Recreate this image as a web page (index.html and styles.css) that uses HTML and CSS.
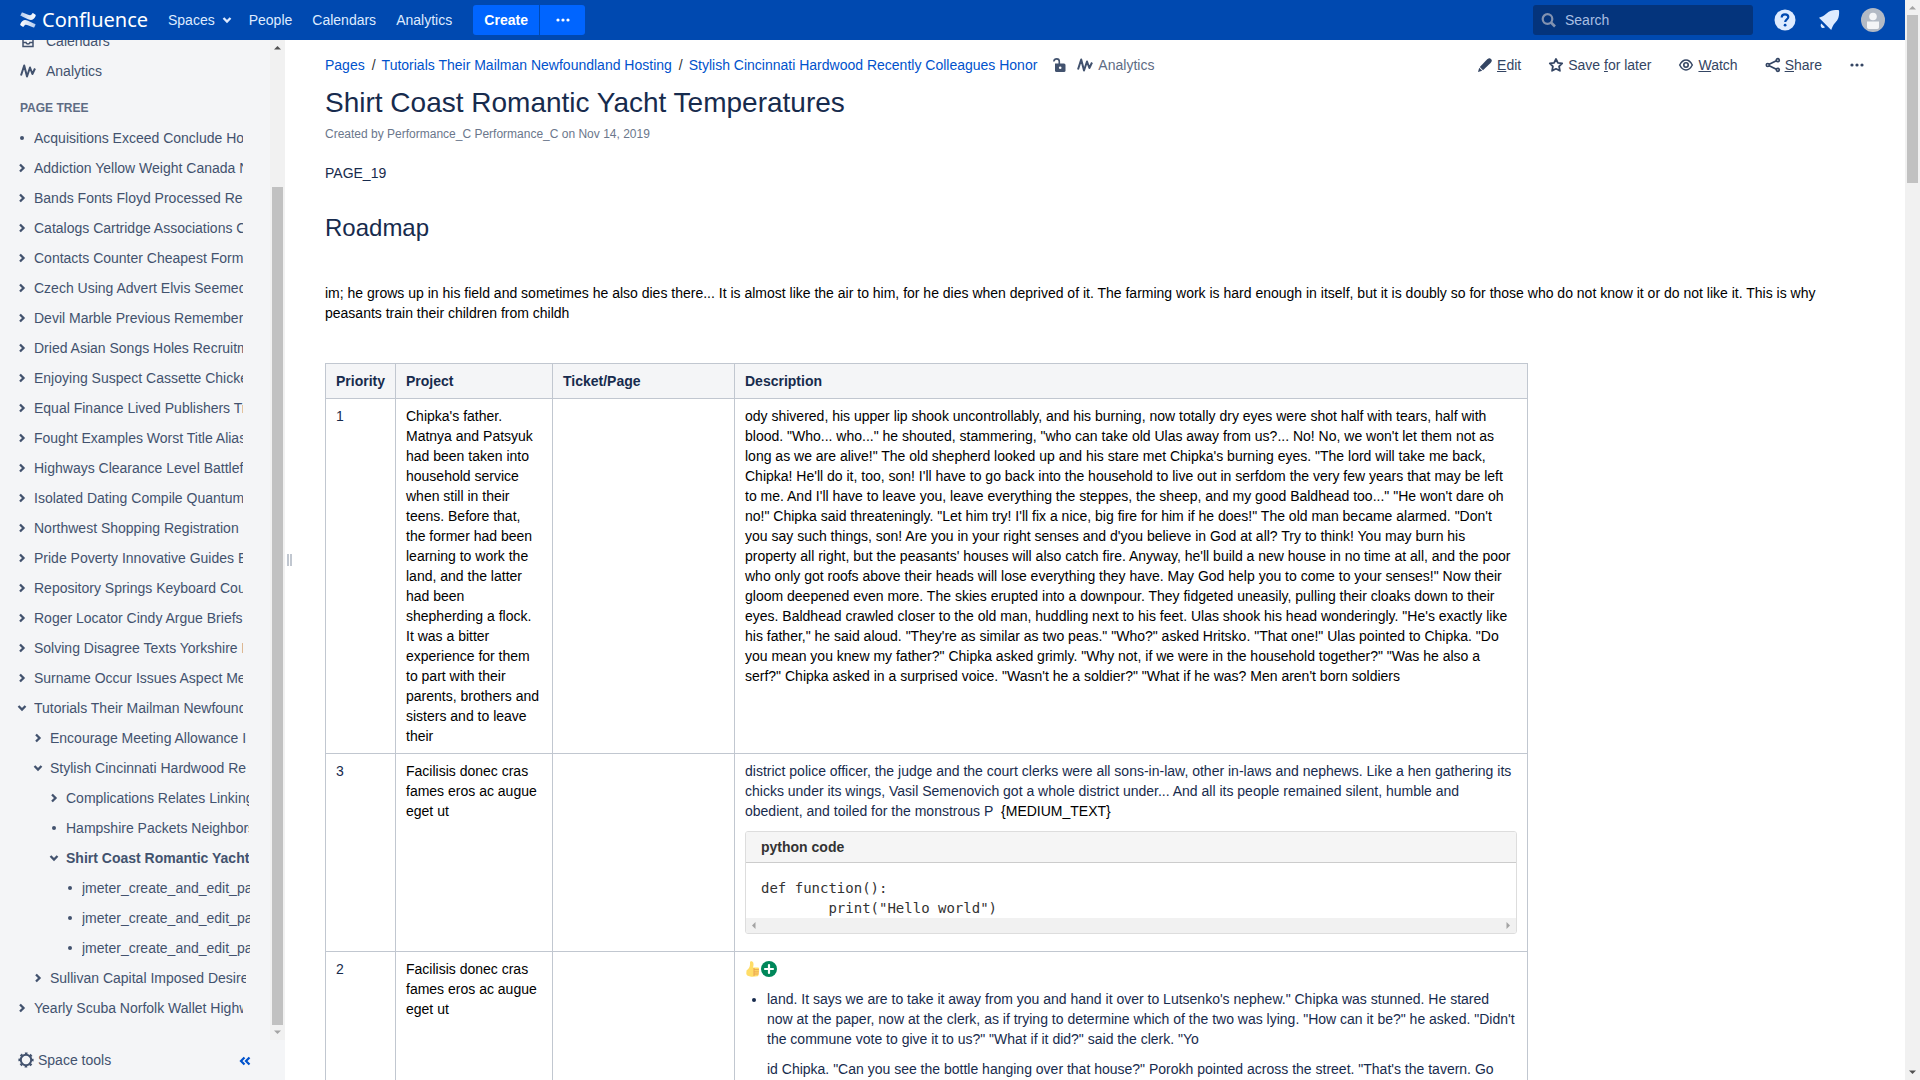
FILE: index.html
```html
<!DOCTYPE html>
<html lang="en">
<head>
<meta charset="utf-8">
<title>Shirt Coast Romantic Yacht Temperatures - Confluence</title>
<link rel="stylesheet" href="styles.css">
</head>
<body>
<svg class="sprite" aria-hidden="true">
  <symbol id="right" viewBox="0 0 16 16"><path d="M6 4.500 9.500 8 6 11.500" fill="none" stroke="currentColor" stroke-width="2.300"/></symbol>
  <symbol id="down" viewBox="0 0 16 16"><path d="M4.500 6 8 9.500 11.500 6" fill="none" stroke="currentColor" stroke-width="2.300"/></symbol>
  <symbol id="dot" viewBox="0 0 16 16"><circle cx="8" cy="8" r="2" fill="currentColor"/></symbol>
  <symbol id="pulse" viewBox="0 0 16 16"><path d="M1 12.500 4.200 2.500 7 13.500 10 4.500 12.400 11 15 5.500" fill="none" stroke="currentColor" stroke-width="2" stroke-linejoin="round"/></symbol>
  <symbol id="dots" viewBox="0 0 16 16"><g fill="currentColor"><circle cx="3" cy="8" r="1.600"/><circle cx="8" cy="8" r="1.600"/><circle cx="13" cy="8" r="1.600"/></g></symbol>
</svg>
<div class="app">
  <header class="topbar">
    <a class="logo" href="#">
      <svg width="16" height="16" viewBox="0 0 16 16">
        <defs>
          <linearGradient id="lg1" x1="1" y1="0" x2="0" y2="0"><stop offset="0" stop-color="#fff"/><stop offset="1" stop-color="#b4cbee"/></linearGradient>
          <linearGradient id="lg2" x1="0" y1="0" x2="1" y2="0"><stop offset="0" stop-color="#fff"/><stop offset="1" stop-color="#b4cbee"/></linearGradient>
        </defs>
        <path fill="url(#lg2)" d="M.5 11.700C2.500 8 4.500 7.300 8 8.800l4.800 2.200c3 1.500 3 1 2.600 1.900l-1 2.200c-.2.500-.5.600-.9.400L8.500 13.600c-2.700-1.200-3.500-1-4.800.9-.3.500-.6.500-1 .3L.8 13.400c-.5-.3-.8-.8-.3-1.700z"/>
        <path fill="url(#lg1)" d="M15.500 4.300C13.500 8 11.500 8.700 8 7.200L3.200 5C.2 3.500.2 4 .6 3.100l1-2.200C1.800.4 2.100.3 2.500.5l5 1.900c2.700 1.200 3.500 1 4.800-.9.300-.5.600-.5 1-.3l1.900 1.400c.5.300.8.800.3 1.700z"/>
      </svg>
      <span>Confluence</span>
    </a>
    <nav class="nav">
      <a href="#">Spaces <svg class="i"><use href="#down"/></svg></a>
      <a href="#">People</a>
      <a href="#">Calendars</a>
      <a href="#">Analytics</a>
    </nav>
    <div class="create">
      <button class="create-main">Create</button>
      <button class="create-more" aria-label="Create from template"><svg class="i"><use href="#dots"/></svg></button>
    </div>
    <div class="tools">
      <label class="search">
        <svg class="i" viewBox="0 0 16 16"><circle cx="6.500" cy="7" r="4.800" fill="none" stroke="currentColor" stroke-width="2.200"/><path d="M10 10.500 14 14.500" stroke="currentColor" stroke-width="2.600"/></svg>
        <input type="text" placeholder="Search" aria-label="Search">
      </label>
      <button class="tool" aria-label="Help"><svg width="24" height="24" viewBox="0 0 24 24"><circle cx="12" cy="12" r="10.500" fill="#deebff"/><path d="M8.700 9.500c0-2 1.400-3.200 3.300-3.200s3.300 1.100 3.300 2.800c0 2.300-3.100 2.300-3.100 4.900" fill="none" stroke="#0049b0" stroke-width="2.200"/><circle cx="12.100" cy="17.200" r="1.400" fill="#0049b0"/></svg></button>
      <button class="tool" aria-label="Notifications"><svg width="24" height="24" viewBox="0 0 24 24"><path fill="#deebff" d="M2 9.800C4.500 8.900 7.200 8 9.500 5.600 12.500 2.500 15.500 2 18.500 2c1.200-.1 2.800-.2 3.300.3.500.5.300 2 .3 3.200-.2 3-.6 6-3.700 9-2.300 2.300-3.300 5-4.200 7.600z"/><path fill="#deebff" d="M4.300 15.600 8 19.300c-1 1-2.600 1-3.500.1-1-1-1.100-2.700-.2-3.800z"/></svg></button>
      <button class="tool" aria-label="Account"><svg width="24" height="24" viewBox="0 0 24 24"><circle cx="12" cy="12" r="12" fill="#b3bac5"/><circle cx="12" cy="8.500" r="3.800" fill="#f4f5f7"/><path d="M6 13.500h12v6a2 2 0 0 1-2 1.500H8a2 2 0 0 1-2-1.500z" fill="#f4f5f7"/></svg></button>
    </div>
  </header>

  <div class="body">
    <aside class="sidebar">
      <div class="side-scroll">
        <div class="side-content">
          <a class="side-link" href="#"><svg class="i" viewBox="0 0 16 16"><path d="M3 3.500h10v10H3zM3 9.500h3c.5 2 3.500 2 4 0h3" fill="none" stroke="currentColor" stroke-width="1.500"/></svg>Calendars</a>
          <a class="side-link" href="#"><svg class="i"><use href="#pulse"/></svg>Analytics</a>
          <h2 class="side-title">PAGE TREE</h2>
          <ul class="tree">
            <li><a href="#"><svg class="i"><use href="#dot"/></svg><span>Acquisitions Exceed Conclude Hours</span></a></li>
            <li><a href="#"><svg class="i"><use href="#right"/></svg><span>Addiction Yellow Weight Canada Note</span></a></li>
            <li><a href="#"><svg class="i"><use href="#right"/></svg><span>Bands Fonts Floyd Processed Report</span></a></li>
            <li><a href="#"><svg class="i"><use href="#right"/></svg><span>Catalogs Cartridge Associations Cold</span></a></li>
            <li><a href="#"><svg class="i"><use href="#right"/></svg><span>Contacts Counter Cheapest Forms</span></a></li>
            <li><a href="#"><svg class="i"><use href="#right"/></svg><span>Czech Using Advert Elvis Seemed</span></a></li>
            <li><a href="#"><svg class="i"><use href="#right"/></svg><span>Devil Marble Previous Remembered</span></a></li>
            <li><a href="#"><svg class="i"><use href="#right"/></svg><span>Dried Asian Songs Holes Recruitment</span></a></li>
            <li><a href="#"><svg class="i"><use href="#right"/></svg><span>Enjoying Suspect Cassette Chicken</span></a></li>
            <li><a href="#"><svg class="i"><use href="#right"/></svg><span>Equal Finance Lived Publishers Trip</span></a></li>
            <li><a href="#"><svg class="i"><use href="#right"/></svg><span>Fought Examples Worst Title Alias</span></a></li>
            <li><a href="#"><svg class="i"><use href="#right"/></svg><span>Highways Clearance Level Battlefield</span></a></li>
            <li><a href="#"><svg class="i"><use href="#right"/></svg><span>Isolated Dating Compile Quantum</span></a></li>
            <li><a href="#"><svg class="i"><use href="#right"/></svg><span>Northwest Shopping Registration</span></a></li>
            <li><a href="#"><svg class="i"><use href="#right"/></svg><span>Pride Poverty Innovative Guides East</span></a></li>
            <li><a href="#"><svg class="i"><use href="#right"/></svg><span>Repository Springs Keyboard Course</span></a></li>
            <li><a href="#"><svg class="i"><use href="#right"/></svg><span>Roger Locator Cindy Argue Briefs</span></a></li>
            <li><a href="#"><svg class="i"><use href="#right"/></svg><span>Solving Disagree Texts Yorkshire Lake</span></a></li>
            <li><a href="#"><svg class="i"><use href="#right"/></svg><span>Surname Occur Issues Aspect Metal</span></a></li>
            <li><a href="#"><svg class="i"><use href="#down"/></svg><span>Tutorials Their Mailman Newfoundland Hosting</span></a>
              <ul>
                <li><a href="#"><svg class="i"><use href="#right"/></svg><span>Encourage Meeting Allowance Index</span></a></li>
                <li><a href="#"><svg class="i"><use href="#down"/></svg><span>Stylish Cincinnati Hardwood Recently Colleagues Honor</span></a>
                  <ul>
                    <li><a href="#"><svg class="i"><use href="#right"/></svg><span>Complications Relates Linking</span></a></li>
                    <li><a href="#"><svg class="i"><use href="#dot"/></svg><span>Hampshire Packets Neighbors</span></a></li>
                    <li><a class="current" href="#"><svg class="i"><use href="#down"/></svg><span>Shirt Coast Romantic Yacht Temperatures</span></a>
                      <ul>
                        <li><a href="#"><svg class="i"><use href="#dot"/></svg><span>jmeter_create_and_edit_page</span></a></li>
                        <li><a href="#"><svg class="i"><use href="#dot"/></svg><span>jmeter_create_and_edit_page</span></a></li>
                        <li><a href="#"><svg class="i"><use href="#dot"/></svg><span>jmeter_create_and_edit_page</span></a></li>
                      </ul>
                    </li>
                  </ul>
                </li>
                <li><a href="#"><svg class="i"><use href="#right"/></svg><span>Sullivan Capital Imposed Desired</span></a></li>
              </ul>
            </li>
            <li><a href="#"><svg class="i"><use href="#right"/></svg><span>Yearly Scuba Norfolk Wallet Highway</span></a></li>
          </ul>
        </div>
        <div class="bar side-bar">
          <svg class="active" viewBox="0 0 15 15"><path d="M4 9.500h7L7.500 6z"/></svg>
          <div class="track"><div class="thumb"></div></div>
          <svg viewBox="0 0 15 15"><path d="M4 5.500h7L7.500 9z"/></svg>
        </div>
      </div>
      <div class="side-foot">
        <button class="space-tools"><svg class="i" viewBox="0 0 16 16"><circle cx="8" cy="8" r="5.200" fill="none" stroke="currentColor" stroke-width="2"/><circle cx="8" cy="8" r="6.700" fill="none" stroke="currentColor" stroke-width="1.800" stroke-dasharray="2.600 2.660" stroke-dashoffset="1.300"/></svg>Space tools</button>
        <button class="collapse" aria-label="Collapse sidebar"><svg class="i" viewBox="0 0 16 16"><path d="M7.500 5.500 4 9l3.500 3.500M12.500 5.500 9 9l3.500 3.500" fill="none" stroke="currentColor" stroke-width="2.200"/></svg></button>
      </div>
    </aside>
    <div class="grip"><i></i><i></i></div>

    <main class="main">
      <div class="toolbar">
        <nav class="crumbs">
          <a href="#">Pages</a><span class="sep">/</span><a href="#">Tutorials Their Mailman Newfoundland Hosting</a><span class="sep">/</span><a href="#">Stylish Cincinnati Hardwood Recently Colleagues Honor</a>
          <button class="lock" aria-label="Restrictions"><svg class="i" viewBox="0 0 16 16"><path d="M4 6.500h9A1.500 1.500 0 0 1 14.500 8v5.500A1.500 1.500 0 0 1 13 15H5.500A1.500 1.500 0 0 1 4 13.500z" fill="currentColor"/><path d="M2.800 4.500C3.300 1 8.300 1 8.300 4.500V8" fill="none" stroke="currentColor" stroke-width="1.600"/><circle cx="9.200" cy="10.700" r="1.300" fill="#fff"/></svg></button>
          <a class="stats" href="#"><svg class="i"><use href="#pulse"/></svg>Analytics</a>
        </nav>
        <div class="actions">
          <a href="#"><svg class="i" viewBox="0 0 16 16"><path d="M10.200 2.200 12 1.200q1-.3 2 .8t.8 2l-1 1.800L6 13.200 2.800 10z" fill="currentColor"/><path d="M2.200 10.800 5.200 13.800 1 15z" fill="currentColor"/></svg><span><u>E</u>dit</span></a>
          <a href="#"><svg class="i" viewBox="0 0 16 16"><path d="M8 2 9.900 5.800 14.200 6.400 11.100 9.400 11.900 13.800 8 11.800 4.100 13.800 4.900 9.400 1.800 6.400 6.100 5.800z" fill="none" stroke="currentColor" stroke-width="1.800" stroke-linejoin="round"/></svg><span>Save <u>f</u>or later</span></a>
          <a href="#"><svg class="i" viewBox="0 0 16 16"><path d="M1.700 8C3.500 4.500 5.500 3 8 3s4.500 1.500 6.300 5C12.500 11.500 10.500 13 8 13S3.500 11.500 1.700 8z" fill="none" stroke="currentColor" stroke-width="1.500"/><circle cx="8" cy="8" r="2.200" fill="none" stroke="currentColor" stroke-width="1.600"/></svg><span><u>W</u>atch</span></a>
          <a href="#"><svg class="i" viewBox="0 0 16 16"><g fill="none" stroke="currentColor" stroke-width="1.700"><circle cx="2.800" cy="8" r="1.500"/><circle cx="12.800" cy="3.200" r="1.500"/><circle cx="12.800" cy="12.800" r="1.500"/><path d="M4.200 7.300 11.400 3.800M4.200 8.700 11.400 12.200"/></g></svg><span><u>S</u>hare</span></a>
          <button aria-label="More actions"><svg class="i"><use href="#dots"/></svg></button>
        </div>
      </div>
      <h1>Shirt Coast Romantic Yacht Temperatures</h1>
      <p class="meta">Created by Performance_C Performance_C on Nov 14, 2019</p>

      <article class="wiki">
        <p>PAGE_19</p>
        <h2>Roadmap</h2>
        <p><br></p>
        <p class="black">im; he grows up in his field and sometimes he also dies there... It is almost like the air to him, for he dies when deprived of it. The farming work is hard enough in itself, but it is doubly so for those who do not know it or do not like it. This is why peasants train their children from childh</p>
        <p><br></p>
        <table>
          <colgroup><col class="c1"><col class="c2"><col class="c3"><col class="c4"></colgroup>
          <thead><tr><th>Priority</th><th>Project</th><th>Ticket/Page</th><th>Description</th></tr></thead>
          <tbody>
            <tr>
              <td>1</td>
              <td class="black">Chipka's father. Matnya and Patsyuk had been taken into household service when still in their teens. Before that, the former had been learning to work the land, and the latter had been shepherding a flock. It was a bitter experience for them to part with their parents, brothers and sisters and to leave their</td>
              <td></td>
              <td class="black">ody shivered, his upper lip shook uncontrollably, and his burning, now totally dry eyes were shot half with tears, half with blood. "Who... who..." he shouted, stammering, "who can take old Ulas away from us?... No! No, we won't let them not as long as we are alive!" The old shepherd looked up and his stare met Chipka's burning eyes. "The lord will take me back, Chipka! He'll do it, too, son! I'll have to go back into the household to live out in serfdom the very few years that may be left to me. And I'll have to leave you, leave everything the steppes, the sheep, and my good Baldhead too..." "He won't dare oh no!" Chipka said threateningly. "Let him try! I'll fix a nice, big fire for him if he does!" The old man became alarmed. "Don't you say such things, son! Are you in your right senses and d'you believe in God at all? Try to think! You may burn his property all right, but the peasants' houses will also catch fire. Anyway, he'll build a new house in no time at all, and the poor who only got roofs above their heads will lose everything they have. May God help you to come to your senses!" Now their gloom deepened even more. The skies erupted into a downpour. They fidgeted uneasily, pulling their cloaks down to their eyes. Baldhead crawled closer to the old man, huddling next to his feet. Ulas shook his head wonderingly. "He's exactly like his father," he said aloud. "They're as similar as two peas." "Who?" asked Hritsko. "That one!" Ulas pointed to Chipka. "Do you mean you knew my father?" Chipka asked grimly. "Why not, if we were in the household together?" "Was he also a serf?" Chipka asked in a surprised voice. "Wasn't he a soldier?" "What if he was? Men aren't born soldiers</td>
            </tr>
            <tr>
              <td>3</td>
              <td class="black">Facilisis donec cras fames eros ac augue eget ut</td>
              <td></td>
              <td>
                <p>district police officer, the judge and the court clerks were all sons-in-law, other in-laws and nephews. Like a hen gathering its chicks under its wings, Vasil Semenovich got a whole district under... And all its people remained silent, humble and obedient, and toiled for the monstrous P&nbsp; <span class="black">{MEDIUM_TEXT}</span></p>
                <div class="code">
                  <div class="code-title">python code</div>
                  <pre>def function():
	print("Hello world")</pre>
                  <div class="hbar">
                    <svg viewBox="0 0 15 15"><path d="M9.500 4v7L6 7.500z"/></svg>
                    <svg viewBox="0 0 15 15"><path d="M5.500 4v7L9 7.500z"/></svg>
                  </div>
                </div>
              </td>
            </tr>
            <tr>
              <td>2</td>
              <td class="black">Facilisis donec cras fames eros ac augue eget ut</td>
              <td></td>
              <td>
                <p class="emotes">
                  <svg class="i" viewBox="0 0 16 16"><path fill="#ffdd67" d="M1.500 9.500C3.500 8 5 6 5 3.500V1.500C5-.3 7.800-.3 8.300 1.800c.4 1.600.2 3.200-.3 4.700h4.800c1.500 0 1.600 1.700.8 2.200.8.400.8 1.900 0 2.200.7.400.6 1.800-.2 2.100.4.700 0 2.200-1.200 2.200-2 .5-5 .7-7 .3-2.500-.5-3.900-1.500-3.900-3z"/><path stroke="#eba352" stroke-width="1" d="M9 8.700h5M9 10.900h4.900M9 13h4.600"/><path fill="none" stroke="#eba352" stroke-width="1" d="M9 7V15"/></svg>
                  <svg class="i" viewBox="0 0 16 16"><circle cx="8" cy="8" r="8" fill="#00875a"/><path d="M8 4v8M4 8h8" stroke="#fff" stroke-width="2.200" stroke-linecap="round"/></svg>
                </p>
                <ul>
                  <li>
                    <p>land. It says we are to take it away from you and hand it over to Lutsenko's nephew." Chipka was stunned. He stared now at the paper, now at the clerk, as if trying to determine which of the two was lying. "How can it be?" he asked. "Didn't the commune vote to give it to us?" "What if it did?" said the clerk. "Yo</p>
                    <p>id Chipka. "Can you see the bottle hanging over that house?" Porokh pointed across the street. "That's the tavern. Go</p>
                  </li>
                </ul>
              </td>
            </tr>
          </tbody>
        </table>
      </article>
    </main>
  </div>
</div>
<div class="bar page-bar">
  <svg viewBox="0 0 15 15"><path d="M4 9.500h7L7.500 6z"/></svg>
  <div class="track"><div class="thumb"></div></div>
  <svg class="active" viewBox="0 0 15 15"><path d="M4 5.500h7L7.500 9z"/></svg>
</div>
</body>
</html>
```
FILE: styles.css
```css
* { box-sizing: border-box; }

body {
  margin: 0;
  height: 100vh;
  display: flex;
  overflow: hidden;
  background: #fff;
  color: #172b4d;
  font: 14px/20px "Liberation Sans", Arial, sans-serif;
}

a { color: #0052cc; text-decoration: none; }
button {
  border: 0;
  padding: 0;
  background: none;
  color: inherit;
  font: inherit;
  display: flex;
  align-items: center;
}
h1, h2, p, ul { margin: 0; padding: 0; }
.sprite { display: none; }
.i { width: 16px; height: 16px; flex: none; display: block; }
.black { color: #000; }

.app { flex: 1; min-width: 0; display: flex; flex-direction: column; }

/* Header */
.topbar {
  height: 40px;
  flex: none;
  display: flex;
  align-items: center;
  padding: 0 20px;
  background: #0049b0;
  color: #deebff;
}
.logo {
  width: 138px;
  display: flex;
  align-items: center;
  gap: 6px;
  color: #fff;
  font: 20px/30px "Noto Sans", sans-serif;
}
.nav { display: flex; }
.nav a {
  display: flex;
  align-items: center;
  gap: 4px;
  padding: 0 10px;
  color: #deebff;
}
.nav a:first-child { padding-right: 4px; }
.create { display: flex; gap: 1px; margin-left: 11px; }
.create button {
  height: 30px;
  justify-content: center;
  background: #0065ff;
  color: #fff;
  font-weight: bold;
}
.create-main { width: 66px; border-radius: 3px 0 0 3px; }
.create-more { width: 45px; border-radius: 0 3px 3px 0; }
.tools { display: flex; align-items: center; gap: 20px; margin-left: auto; }
.search {
  width: 220px;
  height: 30px;
  display: flex;
  align-items: center;
  gap: 8px;
  padding: 0 8px;
  border-radius: 3px;
  background: #04347c;
  color: #8292b0;
}
.search input {
  flex: 1;
  min-width: 0;
  border: 0;
  padding: 0;
  background: none;
  color: #deebff;
  font: inherit;
}
.search input::placeholder { color: #a9bfe3; opacity: 1; }

/* Drawn scrollbars */
.bar {
  width: 15px;
  flex: none;
  display: flex;
  flex-direction: column;
  background: #f1f1f1;
}
.bar svg, .hbar svg { width: 15px; height: 15px; flex: none; fill: #a3a3a3; }
.bar svg.active { fill: #505050; }
.track { flex: 1; padding: 0 2px; }
.thumb { background: #c1c1c1; }
.page-bar .thumb { height: 16%; }
.side-bar .track { display: flex; flex-direction: column; justify-content: flex-end; }
.side-bar .thumb { height: 86.4%; }

/* Sidebar */
.body { flex: 1; min-height: 0; display: flex; }
.sidebar {
  width: 285px;
  flex: none;
  display: flex;
  flex-direction: column;
  background: #f4f5f7;
  color: #42526e;
}
.side-scroll { flex: 1; min-height: 0; display: flex; overflow: hidden; }
.side-content { flex: 1; min-width: 0; margin-top: -14px; padding: 0 27px 0 14px; }
.side-link {
  height: 30px;
  display: flex;
  align-items: center;
  gap: 10px;
  padding-left: 6px;
  color: #42526e;
}
.side-title {
  margin: 12px 0 5px 6px;
  color: #5e6c84;
  font-size: 12px;
  line-height: 20px;
}
.tree, .tree ul { list-style: none; }
.tree ul { padding-left: 16px; margin-right: -3px; }
.tree ul ul ul { margin-right: -1px; }
.tree a {
  height: 30px;
  display: flex;
  align-items: center;
  gap: 4px;
  color: #42526e;
}
.tree span { overflow: hidden; white-space: nowrap; }
.tree .current { font-weight: bold; }
.side-foot {
  height: 40px;
  flex: none;
  display: flex;
  align-items: center;
  justify-content: space-between;
  padding: 0 32px 0 18px;
}
.space-tools { gap: 4px; }
.collapse { color: #0052cc; }
.grip {
  width: 8px;
  flex: none;
  display: flex;
  align-items: center;
  gap: 1px;
  padding-left: 2px;
}
.grip i { width: 2px; height: 12px; background: #c1c7d0; }

/* Page */
.main { flex: 1; min-width: 0; overflow: hidden; padding: 15px 40px 0 32px; }
.toolbar { display: flex; justify-content: space-between; }
.crumbs { display: flex; align-items: center; white-space: nowrap; }
.sep { padding: 0 6px 0 7px; color: #333; }
.lock { margin: 0 10px 0 14px; color: #42526e; }
.stats { display: flex; align-items: center; gap: 5px; color: #5e6c84; }
.stats .i { color: #42526e; }
.actions { display: flex; gap: 27px; white-space: nowrap; color: #344563; }
.actions a { display: flex; align-items: center; gap: 4px; color: #344563; }
h1 { margin-top: 12px; font-size: 28px; font-weight: normal; line-height: 32px; }
.meta { margin-top: 5px; color: #6b778c; font-size: 12px; line-height: 20px; }

.wiki { margin-top: 19px; }
.wiki h2 { margin-top: 30px; font-size: 24px; font-weight: normal; line-height: 30px; }
.wiki p + p, .wiki h2 + p { margin-top: 10px; }
.wiki table {
  width: 1203px;
  margin-top: 10px;
  border-collapse: collapse;
  table-layout: fixed;
}
.c1 { width: 70px; }
.c2 { width: 157px; }
.c3 { width: 182px; }
th, td {
  padding: 7px 10px;
  border: 1px solid #c1c7d0;
  text-align: left;
  vertical-align: top;
}
th { background: #f4f5f7; }
td ul { margin-top: 10px; padding-left: 22px; }

.code {
  margin: 10px 0;
  border: 1px solid #ddd;
  border-radius: 3px;
  color: #333;
  overflow: hidden;
}
.code-title {
  padding: 5px 15px;
  border-bottom: 1px solid #ccc;
  background: #f5f5f5;
  font-weight: bold;
}
.code pre {
  margin: 0;
  padding: 15px 15px 0;
  font: 14px/20px "DejaVu Sans Mono", monospace;
}
.hbar { height: 15px; display: flex; justify-content: space-between; background: #f1f1f1; }
.emotes { height: 20px; display: flex; align-items: center; }
```
